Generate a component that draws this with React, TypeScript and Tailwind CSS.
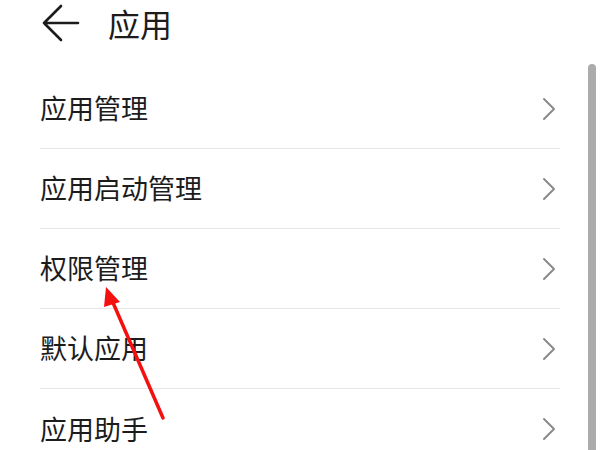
const items = ["应用管理", "应用启动管理", "权限管理", "默认应用", "应用助手"];

function Chevron() {
  return (
    <svg width="14" height="24" viewBox="0 0 14 24" fill="none" className="shrink-0">
      <path d="M2 2 L12 12 L2 22" stroke="#8a8a8a" strokeWidth="2" strokeLinecap="round" strokeLinejoin="round" />
    </svg>
  );
}

export default function App() {
  return (
    <div
      className="relative w-[600px] h-[450px] overflow-hidden bg-white text-[#1c1c1c]"
      style={{ fontFamily: '"Noto Sans CJK SC", "Noto Sans", sans-serif' }}
    >
      <div className="flex items-center h-[46px] pl-[42px]">
        <svg width="38" height="38" viewBox="0 0 38 38" fill="none">
          <path d="M2 19 H36 M2 19 L19 2 M2 19 L19 36" stroke="#1c1c1c" strokeWidth="2.6" strokeLinecap="round" strokeLinejoin="round" />
        </svg>
        <span className="ml-[28px] text-[32px] leading-none">应用</span>
      </div>

      <div className="mt-[23px] pl-[40px] w-[560px]">
        {items.map((label, i) => (
          <div
            key={label}
            className={`flex items-center justify-between h-[80px] ${i < items.length - 1 ? "border-b border-[#e6e6e6]" : ""}`}
          >
            <span className="text-[27px] leading-none -mt-[2px]">{label}</span>
            <div className="pr-[4px]">
              <Chevron />
            </div>
          </div>
        ))}
      </div>

      <div className="absolute left-[588px] top-[64px] w-[8px] h-[400px] rounded-t-full bg-[#ababab]" />

      <svg className="absolute left-0 top-0" width="600" height="450" viewBox="0 0 600 450">
        <line x1="163" y1="418" x2="111" y2="298" stroke="#f51010" strokeWidth="3.5" strokeLinecap="round" />
        <polygon points="106,287 120,302 104,307" fill="#f51010" />
      </svg>
    </div>
  );
}
